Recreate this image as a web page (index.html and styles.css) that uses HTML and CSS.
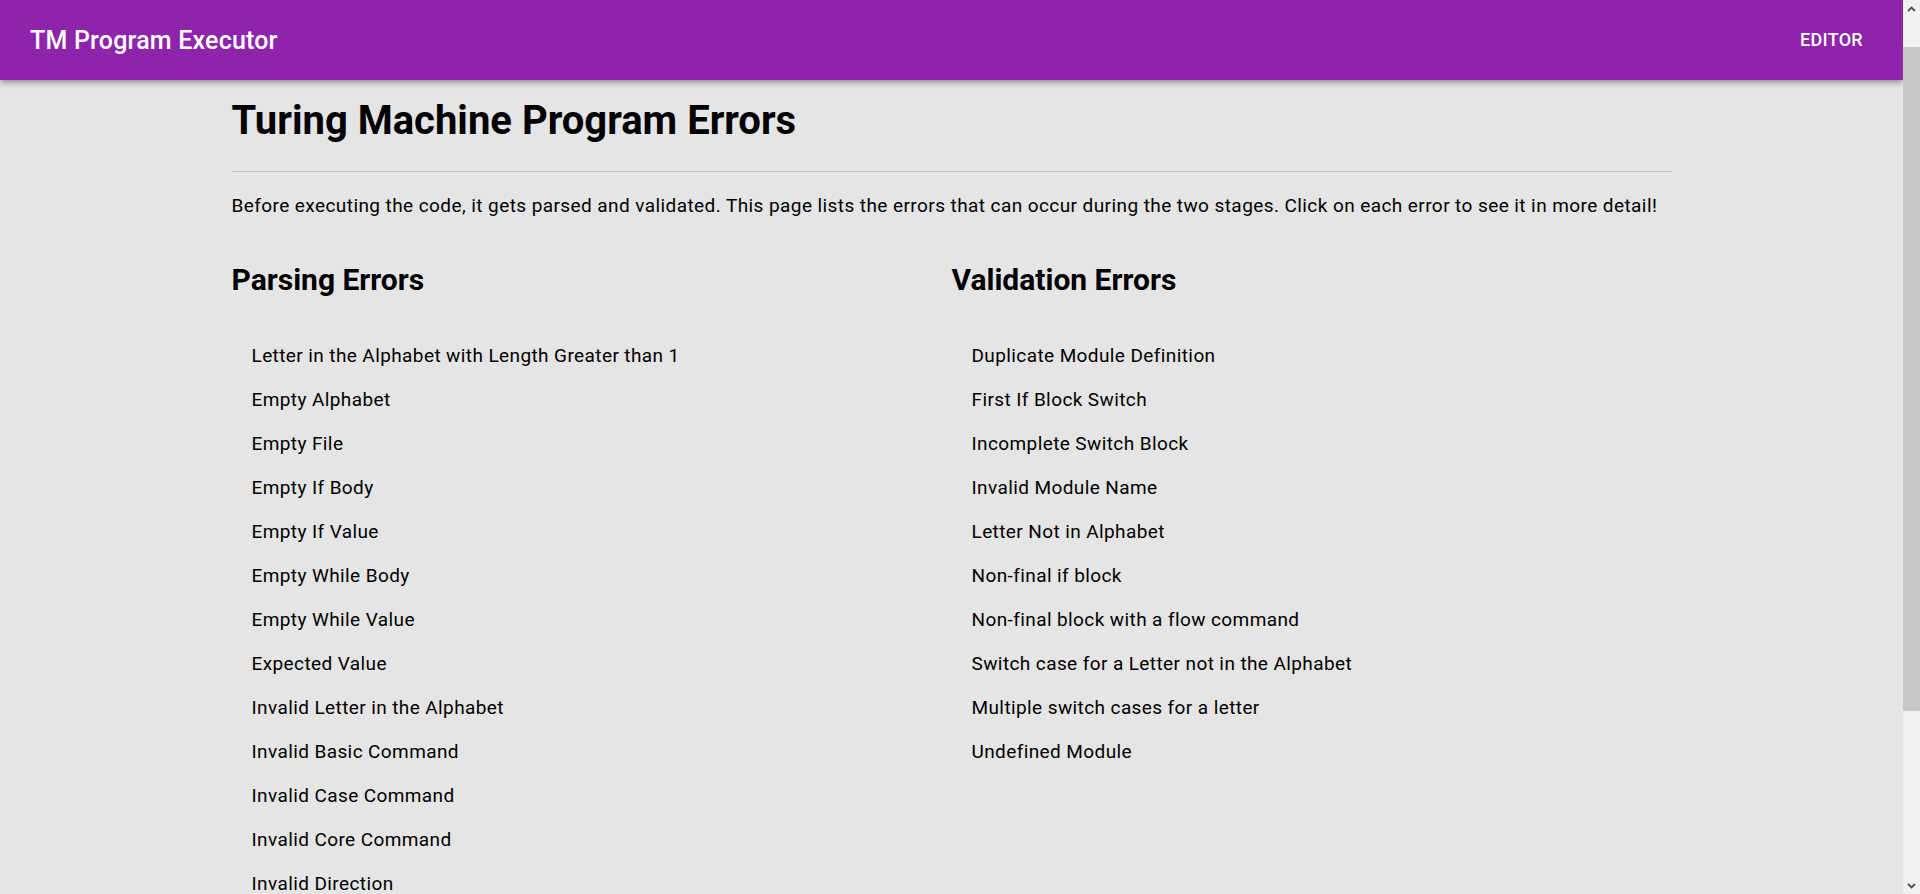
FILE: index.html
```html
<!DOCTYPE html>
<html lang="en">
<head>
<meta charset="utf-8">
<title>TM Program Executor</title>
<link rel="stylesheet" href="styles.css">
</head>
<body>
<div class="app">
  <header class="toolbar">
    <span class="brand">TM Program Executor</span>
    <span class="spacer"></span>
    <a class="nav-btn" href="#">Editor</a>
  </header>
  <main class="container">
    <h1 class="title">Turing Machine Program Errors</h1>
    <hr class="divider">
    <p class="intro">Before executing the code, it gets parsed and validated. This page lists the errors that can occur during the two stages. Click on each error to see it in more detail!</p>
    <div class="columns">
      <section class="column">
        <h2 class="col-title">Parsing Errors</h2>
        <ul class="error-list">
          <li class="error-item">Letter in the Alphabet with Length Greater than 1</li>
          <li class="error-item">Empty Alphabet</li>
          <li class="error-item">Empty File</li>
          <li class="error-item">Empty If Body</li>
          <li class="error-item">Empty If Value</li>
          <li class="error-item">Empty While Body</li>
          <li class="error-item">Empty While Value</li>
          <li class="error-item">Expected Value</li>
          <li class="error-item">Invalid Letter in the Alphabet</li>
          <li class="error-item">Invalid Basic Command</li>
          <li class="error-item">Invalid Case Command</li>
          <li class="error-item">Invalid Core Command</li>
          <li class="error-item">Invalid Direction</li>
          <li class="error-item">Invalid If Value</li>
          <li class="error-item">Invalid Module Header</li>
          <li class="error-item">Invalid While Value</li>
          <li class="error-item">Missing Alphabet</li>
          <li class="error-item">Unexpected Token</li>
        </ul>
      </section>
      <section class="column">
        <h2 class="col-title">Validation Errors</h2>
        <ul class="error-list">
          <li class="error-item">Duplicate Module Definition</li>
          <li class="error-item">First If Block Switch</li>
          <li class="error-item">Incomplete Switch Block</li>
          <li class="error-item">Invalid Module Name</li>
          <li class="error-item">Letter Not in Alphabet</li>
          <li class="error-item">Non-final if block</li>
          <li class="error-item">Non-final block with a flow command</li>
          <li class="error-item">Switch case for a Letter not in the Alphabet</li>
          <li class="error-item">Multiple switch cases for a letter</li>
          <li class="error-item">Undefined Module</li>
        </ul>
      </section>
    </div>
  </main>
</div>
<div class="scrollbar" aria-hidden="true">
  <div class="sb-btn">
    <svg width="9" height="6" viewBox="0 0 9 6"><path d="M1 5 L4.5 1.5 L8 5" fill="none" stroke="#505050" stroke-width="1.8"/></svg>
  </div>
  <div class="sb-track"><div class="sb-thumb"></div></div>
  <div class="sb-btn">
    <svg width="9" height="6" viewBox="0 0 9 6"><path d="M1 1 L4.5 4.5 L8 1" fill="none" stroke="#505050" stroke-width="1.8"/></svg>
  </div>
</div>
</body>
</html>
```
FILE: styles.css
```css
html, body {
  margin: 0;
  padding: 0;
}
body {
  background: #e5e5e5;
  font-family: Roboto, "Liberation Sans", Arial, sans-serif;
  color: #000;
  display: flex;
  align-items: flex-start;
}
.app {
  flex: 1;
  min-width: 0;
}
.scrollbar {
  flex: 0 0 17px;
  height: 100vh;
  position: sticky;
  top: 0;
  background: #f1f1f1;
  display: flex;
  flex-direction: column;
}
.sb-btn {
  height: 17px;
  display: flex;
  align-items: center;
  justify-content: center;
}
.sb-track {
  flex: 1;
  padding-top: 30px;
}
.sb-thumb {
  height: 664px;
  background: #c8c8c8;
}
.toolbar {
  height: 80px;
  background: #8e24aa;
  color: #fff;
  display: flex;
  align-items: center;
  padding: 0 24px 0 30px;
  box-sizing: border-box;
  box-shadow: 0 2px 4px -1px rgba(0,0,0,.2), 0 4px 5px 0 rgba(0,0,0,.14), 0 1px 10px 0 rgba(0,0,0,.12);
  position: relative;
}
.brand {
  font-size: 25px;
  font-weight: 500;
  letter-spacing: 0.2px;
}
.spacer { flex: 1; }
.nav-btn {
  color: #fff;
  text-decoration: none;
  text-transform: uppercase;
  font-size: 18px;
  font-weight: 500;
  letter-spacing: 0.3px;
  padding: 0 16px;
  line-height: 36px;
}
.container {
  width: 1440px;
  margin: 0 auto;
  padding-bottom: 20px;
}
.title {
  margin: 17px 0 0;
  font-size: 40px;
  line-height: 48px;
  font-weight: 700;
}
.divider {
  margin: 26px 0 0;
  border: 0;
  border-top: 1px solid #c8c8c8;
  height: 0;
}
.intro {
  margin: 20px 0 0;
  font-size: 19px;
  letter-spacing: 0.42px;
  line-height: 27px;
}
.columns {
  display: grid;
  grid-template-columns: 1fr 1fr;
  margin-top: 43px;
}
.col-title {
  margin: 0;
  font-size: 30px;
  line-height: 36px;
  font-weight: 700;
}
.error-list {
  list-style: none;
  margin: 36px 0 0;
  padding: 0;
}
.error-item {
  height: 44px;
  line-height: 44px;
  padding: 0 20px;
  font-size: 19px;
  letter-spacing: 0.4px;
  cursor: pointer;
}
```
